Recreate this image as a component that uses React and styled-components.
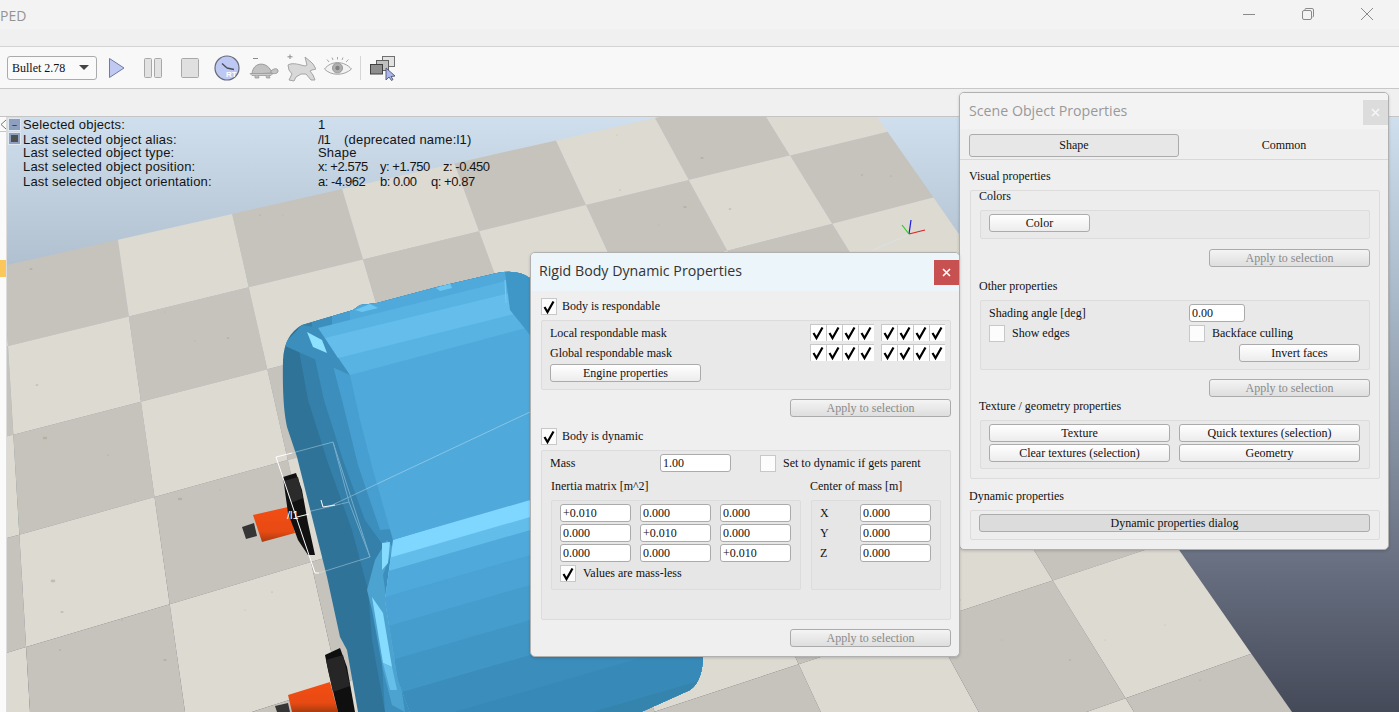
import React from 'react'
import styled, { createGlobalStyle } from 'styled-components'

const GlobalStyle = createGlobalStyle`
  html, body { margin: 0; padding: 0; background: #f0f0f0; }
  * { box-sizing: border-box; }
`

// floor grid lines, read off the screenshot: [x, y, slope]
const floorRows = [
  [7, 265, -0.2269], [8, 346, -0.2437], [12, 435, -0.2576], [18, 535, -0.278], [26, 647, -0.298],
  [280, 703, -0.32], [660, 710, -0.33], [1126, 698, -0.354], [1300, 900, -0.37],
]
const floorCols = [
  [-105, 265, -0.02], [8, 346, 0.0601], [118, 240, 0.142], [232, 213, 0.226], [342, 188, 0.295],
  [455, 165, 0.365], [555, 138, 0.463], [655, 118, 0.545], [767, 118, 0.618], [878, 118, 0.697],
]

const crossing = ([xa, ya, m], [xb, yb, d]) => {
  const x = (xb + d * (ya - m * xa - yb)) / (1 - d * m)
  return [x, ya + m * (x - xa)]
}

const floorCells = []
for (let i = 0; i < floorRows.length - 1; i++) {
  for (let j = 0; j < floorCols.length - 1; j++) {
    const pts = [
      crossing(floorRows[i], floorCols[j]),
      crossing(floorRows[i], floorCols[j + 1]),
      crossing(floorRows[i + 1], floorCols[j + 1]),
      crossing(floorRows[i + 1], floorCols[j]),
    ]
    floorCells.push({ key: `${i}-${j}`, dark: (i + j) % 2 === 1, points: pts.map((p) => p.join(',')).join(' ') })
  }
}

// stains on the floor texture: [x, y, size]
const specks = [
  [31, 269, 1.6], [260, 215, 1], [228, 338, 1.4], [195, 341, 0.8], [37, 385, 1.4], [45, 438, 2.2], [108, 455, 1],
  [135, 500, 0.8], [53, 581, 2.4], [62, 612, 1.6], [180, 499, 2.2], [220, 490, 0.8], [122, 620, 1], [165, 660, 1.8],
  [60, 650, 1.2], [617, 135, 0.8], [702, 158, 1.6], [620, 190, 1], [659, 225, 0.8], [730, 209, 1.4], [685, 207, 1.8],
  [862, 175, 1.2], [891, 176, 1], [960, 600, 1], [1002, 640, 0.8], [1070, 660, 1.2], [1105, 640, 0.7], [1165, 625, 0.8],
  [1200, 680, 1], [880, 620, 1.2], [272, 592, 1], [245, 610, 0.8], [165, 312, 0.8], [283, 215, 0.8],
]

const lowerBands = [
  [500, '#7fd6ff'], [517, '#62bdea'], [530, '#4faadb'], [555, '#4aa3d4'], [585, '#459dcd'],
  [620, '#4096c5'], [655, '#3b8dbb'], [690, '#378ab8'], [730, '#3584ae'], [770, '#3280a9'],
]

const bandAt = (y530) => `380,${y530 + 0.29 * 150} 720,${y530 - 0.29 * 190} 720,760 380,760`

function Scene() {
  return (
    <SceneCanvas viewBox="7 117 1392 595" preserveAspectRatio="none">
      <defs>
        <clipPath id="bodyClip">
          <path d="M358 712 L347 650 L340 637 L327 577 L297 457 L287 427 Q282 405 283 360 Q284 335 302 325 L353 310 L360 305 L377 303 L437 287 L497 273 Q517 269 530 278 L600 340 L703 650 Q704 680 690 690 L641 712 Z" />
        </clipPath>
        <clipPath id="lowerFace">
          <polygon points="393,540 720,440 720,712 410,712 398,680 385,600" />
        </clipPath>
        <linearGradient id="orangeSide" x1="0" y1="0" x2="0" y2="1">
          <stop offset="0" stopColor="#f24e14" />
          <stop offset="0.7" stopColor="#e84a13" />
          <stop offset="1" stopColor="#a83c10" />
        </linearGradient>
      </defs>

      {floorCells.map((cell) => (
        <polygon key={cell.key} points={cell.points} fill={cell.dark ? '#c6c3bc' : '#dddad2'} />
      ))}
      {specks.map(([x, y, size]) => (
        <ellipse key={`${x}-${y}`} cx={x} cy={y} rx={size} ry={size * 0.6} fill="#a39a85" opacity="0.45" />
      ))}

      {/* blue body */}
      <g clipPath="url(#bodyClip)">
        <rect x="270" y="250" width="450" height="470" fill="#2f7398" />
        <polygon points="298,345 308,400 327,460 352,530 368,590 372,640 385,712 720,712 720,250 298,250" fill="#3480aa" />
        <polygon points="312,345 324,400 343,460 365,520 383,545 378,600 385,712 720,712 720,250 312,250" fill="#3c8fbc" />
        <polygon points="332,362 342,400 358,465 380,530 720,500 720,250 332,250" fill="#469fd0" />
        <polygon points="350,375 360,420 373,470 393,540 720,480 720,250 350,250" fill="#4faadb" />
        <polygon points="283,345 302,325 318,328 350,375 312,358" fill="#3c8fbc" />
        <polygon points="318,328 530,275 530,327 350,375" fill="#58b3e3" />
        <polygon points="325,338 530,288 530,310 338,358" fill="#65bdec" />
        <polygon points="505,272 530,272 530,335 510,310" fill="#3f97c8" />
        <polygon points="307,332 322,340 327,353 313,347" fill="#8fe2ff" />
        <polygon points="355,310 370,304 378,308 362,312" fill="#6cc6f2" />
        <polygon points="436,288 450,283 452,288 440,291" fill="#6cc6f2" />
        <line x1="505" y1="280" x2="506" y2="303" stroke="#7cc9ee" strokeWidth="1" />
        <polygon points="387,540 375,560 367,590 372,610 383,670 392,705 405,712 400,680 388,610 383,575 393,548" fill="#4da3d0" />
        <g clipPath="url(#lowerFace)">
          {lowerBands.map(([y, color]) => (
            <polygon key={y} points={bandAt(y)} fill={color} />
          ))}
        </g>
        <polygon points="382,543 390,542 388,563 382,570" fill="#86dcff" />
        <polygon points="372,597 383,613 392,667 383,663" fill="#86dcff" />
        <polygon points="383,663 392,667 397,690 390,690" fill="#66bfe8" />
      </g>

      {/* first wheel */}
      <polygon points="242,527 254,523 257,536 246,539" fill="#353535" />
      <polygon points="253,515 288,507 295,533 262,542" fill="url(#orangeSide)" />
      <polygon points="283,477 296,473 302,490 308,523 315,555 308,555 298,540 288,513" fill="#111" />
      <polygon points="284,481 298,477 303,498 291,503" fill="#2b2b2b" />

      {/* second wheel */}
      <polygon points="275,706 288,703 290,712 277,712" fill="#353535" />
      <polygon points="288,695 330,682 338,712 292,712" fill="url(#orangeSide)" />
      <polygon points="325,655 340,648 347,667 355,712 338,712 328,670" fill="#0f0f0f" />
      <polygon points="326,660 343,655 350,686 333,692" fill="#262626" />

      {/* selection box */}
      <g fill="none" stroke="#ffffff" strokeWidth="1">
        <polyline points="292,453 276,457 315,573 319,573" />
        <polyline points="297,517 309,514" />
        <polyline points="321,500 323,507 335,505" />
      </g>
      <g fill="none" stroke="#d8eef8" strokeWidth="1" opacity="0.4">
        <polyline points="292,453 333,442 370,557 319,573" />
        <polyline points="307,512 349,502 370,557" />
        <polyline points="333,442 349,502" />
        <line x1="328" y1="507" x2="530" y2="412" />
        <line x1="873" y1="250" x2="908" y2="235" />
      </g>
      <LabelTag x="287" y="519">/l1</LabelTag>

      {/* world axes */}
      <line x1="909" y1="234" x2="911" y2="220" stroke="#1a1ae0" strokeWidth="1.2" />
      <line x1="909" y1="234" x2="902" y2="225" stroke="#25d025" strokeWidth="1.2" />
      <line x1="909" y1="234" x2="925" y2="230" stroke="#e02020" strokeWidth="1.2" />
    </SceneCanvas>
  )
}

function CheckMark() {
  return (
    <CheckSvg viewBox="0 0 16 17">
      <path d="M3.5 9 L6.5 14 L12.5 3.5" />
    </CheckSvg>
  )
}

function Check({ on, tight, children }) {
  return (
    <CheckRow $gap={tight ? 5 : 7}>
      <CheckBox>{on && <CheckMark />}</CheckBox>
      {children && <span>{children}</span>}
    </CheckRow>
  )
}

function Mask() {
  const bits = [0, 1, 2, 3]
  return (
    <MaskBits>
      <MaskGroup>{bits.map((b) => <MaskBit key={b}><CheckMark /></MaskBit>)}</MaskGroup>
      <MaskGroup>{bits.map((b) => <MaskBit key={b}><CheckMark /></MaskBit>)}</MaskGroup>
    </MaskBits>
  )
}

function Toolbar() {
  return (
    <ToolRow>
      <Combo>
        <ComboText>Bullet 2.78</ComboText>
        <ComboArrow />
      </Combo>
      <ToolSvg $left={8} width="24" height="24" viewBox="0 0 24 24">
        <path d="M4.5 2.5 L19 12 L4.5 21.5 Z" fill="#c0c9f2" stroke="#6d7ca6" strokeWidth="1" />
      </ToolSvg>
      <ToolSvg $left={12} width="24" height="24" viewBox="0 0 24 24">
        <rect x="3.5" y="2.5" width="7" height="19" rx="1" fill="#e2e2e2" stroke="#a8a8a8" />
        <rect x="13.5" y="2.5" width="7" height="19" rx="1" fill="#e2e2e2" stroke="#a8a8a8" />
      </ToolSvg>
      <ToolSvg $left={13} width="24" height="24" viewBox="0 0 24 24">
        <rect x="3.5" y="2.5" width="17" height="19" rx="1" fill="#e0e0e0" stroke="#a8a8a8" />
      </ToolSvg>
      <ToolSvg $left={12} width="26" height="26" viewBox="0 0 26 26">
        <circle cx="13" cy="13" r="12" fill="#bdc8f3" stroke="#666a78" strokeWidth="1.2" />
        <path d="M13 13 L8 8.5 M13 13 L20 14.5" stroke="#4b4e5a" strokeWidth="1.4" fill="none" />
        <text x="12" y="22" fontFamily="Liberation Sans, sans-serif" fontSize="8" fontWeight="700" fill="#ffffff">RT</text>
      </ToolSvg>
      <ToolSvg $left={9} width="30" height="26" viewBox="0 0 30 26">
        <path d="M4 3.5 H9" stroke="#8c8c8c" strokeWidth="1" />
        <path d="M3 19 C4 6 19 6 23 18 Z" fill="#c2c2c2" stroke="#9a9a9a" />
        <path d="M22 16 C25 13 29 13 29 16 C29 19 25 19 22 18 Z" fill="#c4c4c4" stroke="#9a9a9a" />
        <path d="M1 18.5 H24 L22 20.5 H3 Z" fill="#cbcbcb" stroke="#9a9a9a" strokeWidth="0.8" />
        <path d="M6 20.5 V23 H10 L9.5 20.5 M17 20.5 L17.5 23 H21 L20 20.5" fill="#bcbcbc" stroke="#9a9a9a" strokeWidth="0.8" />
      </ToolSvg>
      <ToolSvg $left={7} width="30" height="28" viewBox="0 0 30 28">
        <path d="M4 0.5 V5 M1.5 2.8 H6.5" stroke="#8c8c8c" strokeWidth="1" />
        <path d="M2 11 C7 8 14 11 19 12 L21 11 L19 3 L25 8 L27 10 L30 15 L26 16 L24 17 L27 21 L29 26 L25 26 L20 20 L15 20 L10 23 L8 27 L3 26 L6 20 L3 16 Z" fill="#d8d8d8" stroke="#a4a4a4" strokeWidth="1" strokeLinejoin="round" />
      </ToolSvg>
      <ToolSvg $left={7} width="30" height="24" viewBox="0 0 30 24">
        <path d="M1.5 13 C8 4.5 21 4.5 28.5 13 C21 20 8 20 1.5 13 Z" fill="#f2f2f2" stroke="#a2a2a2" />
        <circle cx="14.5" cy="12" r="5" fill="#b0b0b0" stroke="#979797" />
        <circle cx="14.5" cy="12" r="2.2" fill="#808080" />
        <path d="M6 6 L4 3.5 M10 4 L9 1.5 M14.5 3.5 V1 M19 4 L20 1.5 M23 6 L25.5 3.5" stroke="#a8a8a8" strokeWidth="1" />
      </ToolSvg>
      <ToolDivider />
      <ToolSvg $left={8} width="28" height="26" viewBox="0 0 28 26">
        <rect x="13.5" y="1.5" width="12" height="10" fill="#e2e2e2" stroke="#707070" />
        <rect x="7.5" y="5.5" width="12" height="10" fill="#c0c0c0" stroke="#606060" />
        <rect x="1.5" y="9.5" width="12" height="9.5" fill="#8e8e8e" stroke="#404040" />
        <path d="M17 13 L17 25 L20 22 L22.5 25.5 L24 24.5 L22 21.5 L26 21 Z" fill="#abb6ec" stroke="#4c5272" strokeWidth="0.9" strokeLinejoin="round" />
      </ToolSvg>
    </ToolRow>
  )
}

export default function App() {
  return (
    <Page>
      <GlobalStyle />
      <TitleBar>
        <AppName>PED</AppName>
        <WinControls>
          <svg width="14" height="14" viewBox="0 0 14 14"><path d="M1 7.5 H13" stroke="#8a8a8a" /></svg>
          <svg width="14" height="14" viewBox="0 0 14 14" fill="none" stroke="#8a8a8a"><rect x="1.5" y="3.5" width="9" height="9" rx="1.5" /><path d="M4 3 V2.5 Q4 1.5 5 1.5 H11 Q12.5 1.5 12.5 3 V9 Q12.5 10 11.5 10" /></svg>
          <svg width="14" height="14" viewBox="0 0 14 14"><path d="M1 1 L13 13 M13 1 L1 13" stroke="#8a8a8a" /></svg>
        </WinControls>
      </TitleBar>
      <MenuStrip />
      <Toolbar />
      <TabStrip />
      <Workspace>
        <SidePanel>
          <SideTop>
            <svg width="6" height="14" viewBox="0 0 6 14"><path d="M6 3 L1 7.5 L6 12" fill="none" stroke="#777" /></svg>
          </SideTop>
          <SideMark />
        </SidePanel>
        <Viewport>
          <Scene />
          <PageButtons>
            <PageButton>–</PageButton>
            <PageButton><PageSquare /></PageButton>
          </PageButtons>
          <InfoTable>
            <InfoLabel>Selected objects:</InfoLabel>
            <InfoValue>1</InfoValue>
            <InfoLabel>Last selected object alias:</InfoLabel>
            <InfoValue><Coord $width={26}>/l1</Coord>(deprecated name:l1)</InfoValue>
            <InfoLabel>Last selected object type:</InfoLabel>
            <InfoValue>Shape</InfoValue>
            <InfoLabel>Last selected object position:</InfoLabel>
            <InfoValue><Coord $width={62}>x: +2.575</Coord><Coord $width={63}>y: +1.750</Coord><Coord>z: -0.450</Coord></InfoValue>
            <InfoLabel>Last selected object orientation:</InfoLabel>
            <InfoValue><Coord $width={62}>a: -4.962</Coord><Coord $width={51}>b: 0.00</Coord><Coord>q: +0.87</Coord></InfoValue>
          </InfoTable>
        </Viewport>
      </Workspace>

      <SceneWindow $left={959} $top={92} $width={430} $height={458}>
        <WindowHead $height={36} $bg="#f3f3f3" $pad={9}>
          <WindowTitle $dim $lift={2}>Scene Object Properties</WindowTitle>
          <CloseBox><CloseX $color="#f6f6f6" /></CloseBox>
        </WindowHead>
        <TabRow>
          <Tab $active>Shape</Tab>
          <Tab>Common</Tab>
        </TabRow>
        <Section>
          <Caption $height={30} $pad={7}>Visual properties</Caption>
          <Group>
            <SubCaption $height={19} $line={11}>Colors</SubCaption>
            <InnerGroup $height={29}>
              <Button $width={101}>Color</Button>
            </InnerGroup>
            <ApplyRow $top={10}><Button $width={161} $disabled>Apply to selection</Button></ApplyRow>
            <SubCaption $height={33} $pad={10}>Other properties</SubCaption>
            <InnerGroup $height={70} $column>
              <FieldRow>
                <FieldLabel $width={200}>Shading angle [deg]</FieldLabel>
                <Field $width={56}>0.00</Field>
              </FieldRow>
              <FieldRow>
                <HalfCell $width={200}><Check>Show edges</Check></HalfCell>
                <Check>Backface culling</Check>
              </FieldRow>
              <FieldRow $end>
                <Button $width={121}>Invert faces</Button>
              </FieldRow>
            </InnerGroup>
            <ApplyRow $top={9}><Button $width={161} $disabled>Apply to selection</Button></ApplyRow>
            <SubCaption $height={23}>Texture / geometry properties</SubCaption>
            <InnerGroup $height={49} $column>
              <ButtonGrid>
                <Button>Texture</Button>
                <Button>Quick textures (selection)</Button>
                <Button>Clear textures (selection)</Button>
                <Button>Geometry</Button>
              </ButtonGrid>
            </InnerGroup>
          </Group>
          <Caption $height={31} $pad={8}>Dynamic properties</Caption>
          <DialogGroup>
            <Button $pressed>Dynamic properties dialog</Button>
          </DialogGroup>
        </Section>
      </SceneWindow>

      <SceneWindow $left={530} $top={252} $width={430} $height={405}>
        <WindowHead $height={38} $bg="#ecf5f9" $pad={8}>
          <WindowTitle $lift={4}>Rigid Body Dynamic Properties</WindowTitle>
          <CloseBox $active><CloseX $color="#ffffff" /></CloseBox>
        </WindowHead>
        <Section $top={6}>
          <Check on tight>Body is respondable</Check>
          <MaskPanel>
            <MaskRow>Local respondable mask<Mask /></MaskRow>
            <MaskRow>Global respondable mask<Mask /></MaskRow>
            <Button $width={151}>Engine properties</Button>
          </MaskPanel>
          <ApplyRow $top={9}><Button $width={161} $disabled>Apply to selection</Button></ApplyRow>
          <StackedCheck><Check on tight>Body is dynamic</Check></StackedCheck>
          <DynamicPanel>
            <FieldRow>
              <FieldLabel $width={110}>Mass</FieldLabel>
              <Field $width={71}>1.00</Field>
              <HalfCell $width={29} />
              <Check>Set to dynamic if gets parent</Check>
            </FieldRow>
            <MatrixLayout>
              <div>
                <MatrixCaption>Inertia matrix [m^2]</MatrixCaption>
                <MatrixBox>
                  <MatrixGrid>
                    <Field>+0.010</Field><Field>0.000</Field><Field>0.000</Field>
                    <Field>0.000</Field><Field>+0.010</Field><Field>0.000</Field>
                    <Field>0.000</Field><Field>0.000</Field><Field>+0.010</Field>
                  </MatrixGrid>
                  <Check on>Values are mass-less</Check>
                </MatrixBox>
              </div>
              <div>
                <MatrixCaption $shift={-1}>Center of mass [m]</MatrixCaption>
                <MatrixBox>
                  <CenterGrid>
                    <span>X</span><Field>0.000</Field>
                    <span>Y</span><Field>0.000</Field>
                    <span>Z</span><Field>0.000</Field>
                  </CenterGrid>
                </MatrixBox>
              </div>
            </MatrixLayout>
          </DynamicPanel>
          <ApplyRow $top={9}><Button $width={161} $disabled>Apply to selection</Button></ApplyRow>
        </Section>
      </SceneWindow>
    </Page>
  )
}

const serif = `"Liberation Serif", "Times New Roman", serif`

const Page = styled.div`
  position: relative;
  width: 1399px;
  height: 712px;
  overflow: hidden;
  display: flex;
  flex-direction: column;
  background: #f0f0f0;
`

const TitleBar = styled.div`
  height: 29px;
  flex: none;
  display: flex;
  align-items: center;
  justify-content: space-between;
  background: #f3f3f3;
  padding-top: 1px;
`

const AppName = styled.div`
  font: 14px "Open Sans", sans-serif;
  color: #939393;
`

const WinControls = styled.div`
  display: flex;
  gap: 45px;
  margin-right: 25px;
  margin-bottom: 3px;
`

const MenuStrip = styled.div`
  height: 18px;
  flex: none;
  background: #f0f0f0;
  border-bottom: 1px solid #d4d4d4;
`

const ToolRow = styled.div`
  height: 42px;
  flex: none;
  display: flex;
  align-items: center;
  padding-left: 7px;
  background: #f8f8f8;
  border-bottom: 1px solid #c8c8c8;
`

const Combo = styled.div`
  width: 90px;
  height: 24px;
  display: flex;
  align-items: center;
  justify-content: space-between;
  padding: 0 7px 0 4px;
  background: #fafafa;
  border: 1px solid #ababab;
  border-radius: 3px;
  font: 12px ${serif};
  color: #111;
`

const ComboText = styled.span`
  padding-top: 2px;
`

const ComboArrow = styled.div`
  width: 0;
  height: 0;
  border-left: 5px solid transparent;
  border-right: 5px solid transparent;
  border-top: 5px solid #444;
`

const ToolSvg = styled.svg`
  flex: none;
  margin-left: ${(p) => p.$left}px;
`

const ToolDivider = styled.div`
  width: 1px;
  height: 24px;
  margin-left: 7px;
  background: #d6d6d6;
`

const TabStrip = styled.div`
  height: 28px;
  flex: none;
  background: #f0f0f0;
  border-bottom: 1px solid #c4c4c4;
`

const Workspace = styled.div`
  flex: 1;
  display: flex;
  min-height: 0;
`

const SidePanel = styled.div`
  width: 7px;
  flex: none;
  background: #fafafa;
  border-right: 1px solid #dcdcdc;
`

const SideTop = styled.div`
  height: 143px;
  & > svg {
    display: block;
    height: 15px;
    border-bottom: 1px solid #c4c4c4;
  }
`

const SideMark = styled.div`
  height: 17px;
  background: #fcc75a;
`

const Viewport = styled.div`
  position: relative;
  flex: 1;
  background: linear-gradient(180deg, #cfdfed 0, #a9b9c9 183px, #6b7384 433px, #454a59 595px);
`

const SceneCanvas = styled.svg`
  position: absolute;
  inset: 0;
  width: 100%;
  height: 100%;
`

const LabelTag = styled.text`
  font: 11px "Liberation Sans", sans-serif;
  fill: #ffffff;
`

const PageButtons = styled.div`
  position: absolute;
  left: 1px;
  top: 1px;
  display: flex;
  flex-direction: column;
  gap: 1px;
`

const PageButton = styled.div`
  width: 13px;
  height: 13px;
  display: flex;
  align-items: center;
  justify-content: center;
  background: #8f9fc0;
  border: 1px solid #dfe7f0;
  font: 700 9px "Liberation Sans", sans-serif;
  color: #444;
`

const PageSquare = styled.div`
  width: 7px;
  height: 7px;
  background: #505050;
`

const InfoTable = styled.div`
  position: absolute;
  left: 16px;
  top: 0;
  display: grid;
  grid-template-columns: 295px auto;
  grid-template-rows: 15px 15px 12px 15px 15px;
  align-items: center;
  font: 13px/14px "Liberation Sans", sans-serif;
  color: #141414;
  white-space: nowrap;
`

const InfoLabel = styled.span`
  letter-spacing: 0.18px;
`

const InfoValue = styled.span`
  display: flex;
  letter-spacing: 0.2px;
`

const Coord = styled.span`
  width: ${(p) => (p.$width ? `${p.$width}px` : 'auto')};
  letter-spacing: -0.45px;
`

const SceneWindow = styled.div`
  position: absolute;
  left: ${(p) => p.$left}px;
  top: ${(p) => p.$top}px;
  width: ${(p) => p.$width}px;
  height: ${(p) => p.$height}px;
  background: #efefef;
  border: 1px solid #b0b0b0;
  border-radius: 5px;
  overflow: hidden;
  font: 12px/18px ${serif};
  color: #111;
  box-shadow: 0 1px 3px rgba(0, 0, 0, 0.18);
`

const WindowHead = styled.div`
  height: ${(p) => p.$height}px;
  display: flex;
  align-items: center;
  justify-content: space-between;
  padding-left: ${(p) => p.$pad}px;
  background: ${(p) => p.$bg};
`

const WindowTitle = styled.div`
  font: 14.2px "Open Sans", sans-serif;
  margin-bottom: ${(p) => p.$lift}px;
  color: ${(p) => (p.$dim ? '#999999' : '#333333')};
`

const CloseBox = styled.div`
  width: 25px;
  height: 25px;
  align-self: flex-start;
  margin-top: 7px;
  display: flex;
  align-items: center;
  justify-content: center;
  background: ${(p) => (p.$active ? '#c75050' : '#dcdcdc')};
`

const CloseX = ({ $color }) => (
  <svg width="9" height="9" viewBox="0 0 9 9"><path d="M1 1 L8 8 M8 1 L1 8" stroke={$color} strokeWidth="1.6" /></svg>
)

const TabRow = styled.div`
  display: grid;
  grid-template-columns: 210px 210px;
  padding: 5px 0 0 9px;
  height: 31px;
  border-bottom: 1px solid #d8d8d8;
`

const Tab = styled.div`
  height: 23px;
  display: flex;
  align-items: center;
  justify-content: center;
  padding-bottom: 1px;
  background: ${(p) => (p.$active ? '#e7e7e7' : 'transparent')};
  border: 1px solid ${(p) => (p.$active ? '#ababab' : 'transparent')};
  border-radius: 3px;
`

const Section = styled.div`
  display: flex;
  flex-direction: column;
  padding: ${(p) => p.$top || 0}px 8px 0 10px;
`

const Caption = styled.div`
  height: ${(p) => p.$height}px;
  flex: none;
  margin-left: -1px;
  padding-top: ${(p) => p.$pad}px;
`

const Group = styled.div`
  display: flex;
  flex-direction: column;
  flex: none;
  padding: 0 9px 9px;
  height: 289px;
  background: #ededed;
  border: 1px solid #dcdcdc;
  border-radius: 2px;
`

const SubCaption = styled.div`
  height: ${(p) => p.$height}px;
  flex: none;
  margin-left: -1px;
  padding-top: ${(p) => p.$pad || 0}px;
  line-height: ${(p) => p.$line || 18}px;
`

const InnerGroup = styled.div`
  height: ${(p) => p.$height}px;
  flex: none;
  display: flex;
  flex-direction: ${(p) => (p.$column ? 'column' : 'row')};
  gap: 2px;
  padding: 3px 9px 3px 8px;
  background: #e9e9e9;
  border: 1px solid #dcdcdc;
  border-radius: 2px;
`

const ApplyRow = styled.div`
  display: flex;
  flex: none;
  justify-content: flex-end;
  margin-top: ${(p) => p.$top}px;
`

const Button = styled.div`
  height: 18px;
  width: ${(p) => (p.$width ? `${p.$width}px` : 'auto')};
  flex: none;
  display: flex;
  align-items: center;
  justify-content: center;
  background: ${(p) => {
    if (p.$pressed) return '#dcdcdc'
    if (p.$disabled) return 'linear-gradient(180deg, #f4f4f4, #dedede)'
    return 'linear-gradient(180deg, #ffffff, #ececec)'
  }};
  border: 1px solid #ababab;
  border-radius: 3px;
  color: ${(p) => (p.$disabled ? '#8a8a8a' : '#111111')};
`

const ButtonGrid = styled.div`
  display: grid;
  grid-template-columns: 181px 181px;
  gap: 2px 9px;
`

const DialogGroup = styled.div`
  height: 30px;
  flex: none;
  padding: 3px 9px 0 8px;
  background: #ededed;
  border: 1px solid #dcdcdc;
  border-radius: 2px;
`

const FieldRow = styled.div`
  height: 18px;
  flex: none;
  display: flex;
  align-items: center;
  justify-content: ${(p) => (p.$end ? 'flex-end' : 'flex-start')};
`

const FieldLabel = styled.div`
  width: ${(p) => p.$width}px;
  flex: none;
`

const HalfCell = styled.div`
  width: ${(p) => p.$width}px;
  flex: none;
`

const Field = styled.div`
  width: ${(p) => (p.$width ? `${p.$width}px` : 'auto')};
  height: 18px;
  flex: none;
  padding-left: 2px;
  line-height: 16px;
  background: #ffffff;
  border: 1px solid #ababab;
  border-radius: 3px;
`

const CheckRow = styled.div`
  height: 18px;
  flex: none;
  display: flex;
  align-items: center;
  gap: ${(p) => p.$gap}px;
`

const CheckBox = styled.div`
  width: 16px;
  height: 17px;
  flex: none;
  background: #fcfcfc;
  border: 1px solid #c8c8c8;
`

const CheckSvg = styled.svg`
  display: block;
  width: 16px;
  height: 17px;
  margin: -1px;
  fill: none;
  stroke: #000000;
  stroke-width: 2.2;
`

const MaskPanel = styled.div`
  height: 70px;
  flex: none;
  margin-top: 5px;
  padding: 3px 0 0 8px;
  display: flex;
  flex-direction: column;
  gap: 3px;
  background: #e9e9e9;
  border: 1px solid #dcdcdc;
  border-radius: 2px;
`

const MaskRow = styled.div`
  height: 17px;
  flex: none;
  display: flex;
  align-items: center;
  justify-content: space-between;
  padding-right: 5px;
`

const MaskBits = styled.div`
  display: flex;
  gap: 7px;
`

const MaskGroup = styled.div`
  display: flex;
`

const MaskBit = styled.div`
  width: 16px;
  height: 17px;
  background: #ffffff;
  border-top: 1px solid #c8c8c8;
  border-left: 1px solid #c8c8c8;
  & > svg { margin: -1px 0 0 -1px; }
`

const StackedCheck = styled.div`
  margin-top: 10px;
`

const DynamicPanel = styled.div`
  height: 170px;
  flex: none;
  margin-top: 5px;
  padding: 3px 0 0 8px;
  background: #e9e9e9;
  border: 1px solid #dcdcdc;
  border-radius: 2px;
`

const MatrixLayout = styled.div`
  display: grid;
  grid-template-columns: 250px 130px;
  gap: 10px;
  margin-top: 4px;
  margin-left: 1px;
`

const MatrixCaption = styled.div`
  height: 24px;
  line-height: 20px;
  margin-left: ${(p) => p.$shift || 0}px;
`

const MatrixBox = styled.div`
  height: 90px;
  padding: 3px 8px;
  display: flex;
  flex-direction: column;
  gap: 2px;
  background: #e6e6e6;
  border: 1px solid #dcdcdc;
  border-radius: 2px;
`

const MatrixGrid = styled.div`
  display: grid;
  grid-template-columns: repeat(3, 71px);
  gap: 2px 9px;
`

const CenterGrid = styled.div`
  display: grid;
  grid-template-columns: 40px 71px;
  gap: 2px 0;
`
